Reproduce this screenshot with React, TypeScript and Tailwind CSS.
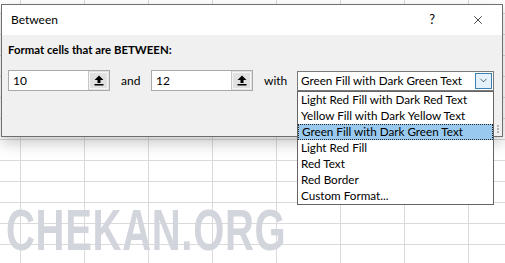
import { X, ChevronDown } from 'lucide-react';

const options = [
  'Light Red Fill with Dark Red Text',
  'Yellow Fill with Dark Yellow Text',
  'Green Fill with Dark Green Text',
  'Light Red Fill',
  'Red Text',
  'Red Border',
  'Custom Format...',
];

function SpinIcon() {
  return (
    <svg width="10" height="11" viewBox="0 0 10 11">
      <path d="M5 0.5 L9.5 5 L6.5 5 L6.5 8 L3.5 8 L3.5 5 L0.5 5 Z" fill="#000" />
      <rect x="0.5" y="9" width="9" height="1.5" fill="#000" />
    </svg>
  );
}

function RangeInput({ value }: { value: string }) {
  return (
    <div className="flex h-[21px] w-[102px] border border-[#a9a9a9] bg-white">
      <div className="flex flex-1 items-center pl-[4px] text-[12px]">{value}</div>
      <div className="flex w-[21px] items-center justify-center border-l border-[#c6c6c6] bg-[#e1e1e1] outline outline-1 -outline-offset-2 outline-[#f5f5f5]">
        <SpinIcon />
      </div>
    </div>
  );
}

export default function App() {
  return (
    <div
      className="relative h-[263px] w-[505px] overflow-hidden bg-white text-black"
      style={{ fontFamily: 'Lato, "Noto Sans", sans-serif' }}
    >
      {/* spreadsheet grid */}
      <div className="absolute inset-0 bg-[linear-gradient(to_right,#dadada_1px,transparent_1px),linear-gradient(to_bottom,#dadada_1px,transparent_1px)] bg-[size:64px_21px] bg-[position:20px_13px]" />

      {/* watermark */}
      <div
        className="absolute left-[6px] top-[201px] origin-left scale-x-[0.69] whitespace-nowrap text-[58px] font-black leading-none tracking-[1px] text-[#d2d5db]"
        style={{ fontFamily: '"Liberation Sans", Arial, sans-serif' }}
      >
        CHEKAN.ORG
      </div>

      {/* dialog */}
      <div className="absolute left-[1px] top-[4px] flex h-[133px] w-[502px] flex-col border border-[#6f6f6f] bg-[#f0f0f0] shadow-[0_6px_14px_rgba(0,0,0,0.22)]">
        <div className="flex h-[30px] items-center bg-white pl-[9px] pr-[17px] text-[12px]">
          <span>Between</span>
          <span className="ml-auto mr-[36px] text-[13px]">?</span>
          <X className="h-[14px] w-[14px]" strokeWidth={1.2} />
        </div>
        <div className="px-[6px] pt-[7px]">
          <div className="text-[11.4px] font-bold leading-[16px]">Format cells that are BETWEEN:</div>
          <div className="mt-[12px] flex items-center text-[12px]">
            <RangeInput value="10" />
            <span className="ml-[11px] w-[30px]">and</span>
            <RangeInput value="12" />
            <span className="ml-[11px] w-[33px]">with</span>
            <div className="flex h-[20px] w-[197px] items-center border border-[#7a7a7a] bg-white pl-[3px] pr-[1px] text-[11.7px]">
              <span className="flex-1 whitespace-nowrap">Green Fill with Dark Green Text</span>
              <div className="flex h-[16px] w-[17px] items-center justify-center border border-[#3c7fb1] bg-[#e5f1fb]">
                <ChevronDown className="h-[11px] w-[11px]" strokeWidth={1.3} />
              </div>
            </div>
          </div>
        </div>
        {/* resize grip */}
        <div className="absolute bottom-[3px] right-[3px] flex flex-col gap-[1px]">
          <div className="h-[2px] w-[2px] bg-[#b4b4b4]" />
          <div className="h-[2px] w-[2px] bg-[#b4b4b4]" />
          <div className="h-[2px] w-[2px] bg-[#b4b4b4]" />
        </div>
      </div>

      {/* dropdown list */}
      <div className="absolute left-[297px] top-[91px] w-[197px] border border-[#646464] bg-white text-[11.7px]">
        {options.map((o, i) => (
          <div
            key={o}
            className={`flex h-[16px] items-center whitespace-nowrap pl-[3px] leading-none ${
              i === 2 ? 'border border-dotted border-[#222] bg-[#99c9ef] pl-[2px]' : ''
            }`}
          >
            {o}
          </div>
        ))}
      </div>
    </div>
  );
}
